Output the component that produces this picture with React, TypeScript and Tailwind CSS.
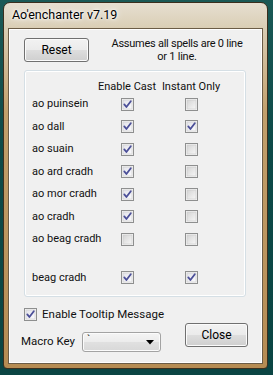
import type React from "react";

const SPELLS: { name: string; cast: boolean; instant: boolean }[] = [
  { name: "ao puinsein", cast: true, instant: false },
  { name: "ao dall", cast: true, instant: true },
  { name: "ao suain", cast: true, instant: false },
  { name: "ao ard cradh", cast: true, instant: false },
  { name: "ao mor cradh", cast: true, instant: false },
  { name: "ao cradh", cast: true, instant: false },
  { name: "ao beag cradh", cast: false, instant: false },
];

const CheckBox: React.FC<{ checked: boolean }> = ({ checked }) => (
  <svg width="13" height="13" viewBox="0 0 13 13" className="block shrink-0">
    <defs>
      <linearGradient id="cbOn" x1="0" y1="0" x2="1" y2="1">
        <stop offset="0" stopColor="#e3e3ea" />
        <stop offset="1" stopColor="#fbfbfd" />
      </linearGradient>
      <linearGradient id="cbOff" x1="0" y1="0" x2="1" y2="1">
        <stop offset="0" stopColor="#d4d4d4" />
        <stop offset="1" stopColor="#f7f7f7" />
      </linearGradient>
    </defs>
    <rect x="0.5" y="0.5" width="12" height="12" fill="#f4f4f4" stroke="#8e8f8f" />
    <rect x="2" y="2" width="9" height="9" fill={checked ? "url(#cbOn)" : "url(#cbOff)"} stroke="#c9c9c9" strokeWidth="0.6" />
    {checked && (
      <path
        d="M3.3 6.4 L5.4 9 L9.8 3.2"
        fill="none"
        stroke="#4b4f98"
        strokeWidth="1.8"
        strokeLinecap="round"
        strokeLinejoin="round"
      />
    )}
  </svg>
);

const VistaButton: React.FC<{ label: string; className?: string }> = ({ label, className }) => (
  <button
    className={`flex items-center justify-center rounded-[3px] border border-[#707070] bg-[linear-gradient(to_bottom,#f2f2f2_0%,#ebebeb_48%,#dddddd_52%,#cfcfcf_100%)] shadow-[inset_0_0_0_1px_#fbfbfb] text-[12px] text-black ${className ?? ""}`}
  >
    {label}
  </button>
);

export default function App() {
  return (
    <div className="w-[273px] h-[375px] bg-[linear-gradient(to_bottom,#1a5956,#0d4a48_40%,#0b4543)] pt-[2px] pl-[3px] font-['Roboto','Liberation_Sans',sans-serif] text-[11px] text-[#111] overflow-hidden">
      {/* Window frame */}
      <div className="w-[265px] h-[367px] flex flex-col rounded-t-[7px] rounded-b-[4px] border border-[#3b2f1e] bg-[linear-gradient(to_bottom,#e6dfd1_0%,#d8cbb0_8%,#c2a06c_30%,#b68c53_100%)]">
        {/* Title bar */}
        <div className="h-[25px] shrink-0 flex items-center pl-[8px] text-[12.5px] text-black [text-shadow:0_0_8px_#ffffff,0_0_4px_#ffffff,0_0_2px_#ffffff]">
          Ao'enchanter v7.19
        </div>

        {/* Client area */}
        <div className="flex-1 mx-[4px] mb-[4px] border border-[#6b5c46]">
          <div className="h-full border border-white bg-[#f0f0f0] flex flex-col">
            {/* Top row */}
            <div className="flex items-center pl-[14px] pt-[7px]">
              <VistaButton label="Reset" className="w-[65px] h-[24px]" />
              <div className="flex-1 ml-[4px] text-center leading-[13px] tracking-[-0.25px]">
                Assumes all spells are 0 line
                <br />
                or 1 line.
              </div>
            </div>

            {/* Group box */}
            <div className="ml-[14px] mt-[7px] w-[222px] rounded-[3px] border border-[#d5dfe5] shadow-[inset_0_0_0_1px_#ffffff] pt-[9px] pb-[7px] pl-[7px]">
              <div className="flex h-[13px] items-center leading-[13px]">
                <div className="w-[64px]" />
                <div className="w-[62px] text-center whitespace-nowrap">Enable Cast</div>
                <div className="w-[66px] text-center whitespace-nowrap">Instant Only</div>
              </div>
              {SPELLS.map((s) => (
                <div key={s.name} className="flex h-[22.5px] items-center">
                  <div className="w-[64px] whitespace-nowrap">{s.name}</div>
                  <div className="w-[62px] flex justify-center">
                    <CheckBox checked={s.cast} />
                  </div>
                  <div className="w-[66px] flex justify-center">
                    <CheckBox checked={s.instant} />
                  </div>
                </div>
              ))}
              <div className="h-[16px]" />
              <div className="flex h-[22.5px] items-center">
                <div className="w-[64px] whitespace-nowrap">beag cradh</div>
                <div className="w-[62px] flex justify-center">
                  <CheckBox checked />
                </div>
                <div className="w-[66px] flex justify-center">
                  <CheckBox checked />
                </div>
              </div>
            </div>

            {/* Bottom area */}
            <div className="flex justify-between">
              <div className="flex flex-col">
                <div className="mt-[11px] ml-[14px] flex items-center gap-[5px] h-[13px]">
                  <CheckBox checked />
                  <span className="text-[11.5px] whitespace-nowrap">Enable Tooltip Message</span>
                </div>
                <div className="mt-[11px] ml-[11px] flex items-center">
                  <span className="w-[61px] text-[11.5px] whitespace-nowrap">Macro Key</span>
                  <div className="w-[79px] h-[20px] rounded-[3px] border border-[#a3a3a3] bg-[linear-gradient(to_bottom,#f4f4f4_0%,#ececec_48%,#e0e0e0_52%,#d8d8d8_100%)] shadow-[inset_0_0_0_1px_#fbfbfb] flex items-start justify-between pl-[4px] pr-[6px]">
                    <span className="text-[11px] leading-[11px] mt-[1px]">`</span>
                    <svg width="8" height="5" viewBox="0 0 8 5" className="self-center">
                      <path d="M0 0 H8 L4 4.5 Z" fill="#000" />
                    </svg>
                  </div>
                </div>
              </div>
              <VistaButton label="Close" className="mt-[26px] mr-[13px] w-[63px] h-[24px]" />
            </div>
          </div>
        </div>
      </div>
    </div>
  );
}
